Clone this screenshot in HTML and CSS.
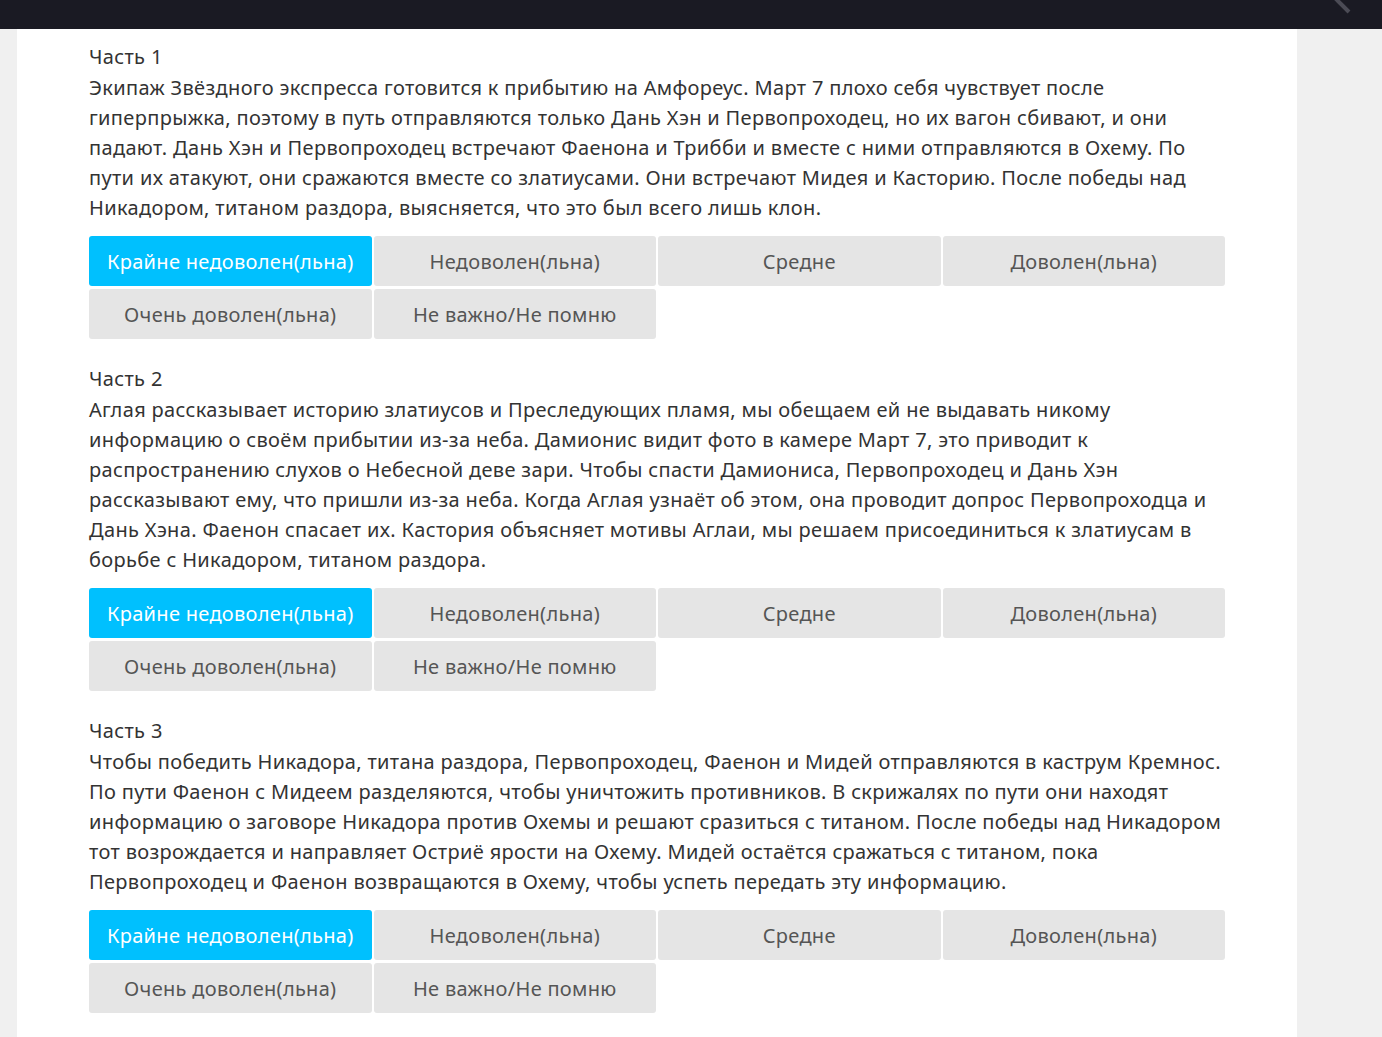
FILE: index.html
```html
<!DOCTYPE html>
<html lang="ru">
<head>
<meta charset="utf-8">
<title>Опрос</title>
<link rel="stylesheet" href="styles.css">
</head>
<body>
<header class="topbar">
  <svg class="close-mark" width="24" height="16" viewBox="0 0 24 16"><line x1="2" y1="-4" x2="18" y2="12" stroke="#4b4b55" stroke-width="4"/></svg>
</header>
<div class="page">
  <main class="panel">
    <section class="part">
      <div class="title">Часть 1</div>
      <p class="desc">Экипаж Звёздного экспресса готовится к прибытию на Амфореус. Март 7 плохо себя чувствует после гиперпрыжка, поэтому в путь отправляются только Дань Хэн и Первопроходец, но их вагон сбивают, и они падают. Дань Хэн и Первопроходец встречают Фаенона и Трибби и вместе с ними отправляются в Охему. По пути их атакуют, они сражаются вместе со златиусами. Они встречают Мидея и Касторию. После победы над Никадором, титаном раздора, выясняется, что это был всего лишь клон.</p>
      <div class="options">
        <button class="opt active">Крайне недоволен(льна)</button>
        <button class="opt">Недоволен(льна)</button>
        <button class="opt">Средне</button>
        <button class="opt">Доволен(льна)</button>
        <button class="opt">Очень доволен(льна)</button>
        <button class="opt">Не важно/Не помню</button>
      </div>
    </section>
    <section class="part">
      <div class="title">Часть 2</div>
      <p class="desc">Аглая рассказывает историю златиусов и Преследующих пламя, мы обещаем ей не выдавать никому информацию о своём прибытии из-за неба. Дамионис видит фото в камере Март 7, это приводит к распространению слухов о Небесной деве зари. Чтобы спасти Дамиониса, Первопроходец и Дань Хэн рассказывают ему, что пришли из-за неба. Когда Аглая узнаёт об этом, она проводит допрос Первопроходца и Дань Хэна. Фаенон спасает их. Кастория объясняет мотивы Аглаи, мы решаем присоединиться к златиусам в борьбе с Никадором, титаном раздора.</p>
      <div class="options">
        <button class="opt active">Крайне недоволен(льна)</button>
        <button class="opt">Недоволен(льна)</button>
        <button class="opt">Средне</button>
        <button class="opt">Доволен(льна)</button>
        <button class="opt">Очень доволен(льна)</button>
        <button class="opt">Не важно/Не помню</button>
      </div>
    </section>
    <section class="part">
      <div class="title">Часть 3</div>
      <p class="desc">Чтобы победить Никадора, титана раздора, Первопроходец, Фаенон и Мидей отправляются в каструм Кремнос. По пути Фаенон с Мидеем разделяются, чтобы уничтожить противников. В скрижалях по пути они находят информацию о заговоре Никадора против Охемы и решают сразиться с титаном. После победы над Никадором тот возрождается и направляет Остриё ярости на Охему. Мидей остаётся сражаться с титаном, пока Первопроходец и Фаенон возвращаются в Охему, чтобы успеть передать эту информацию.</p>
      <div class="options">
        <button class="opt active">Крайне недоволен(льна)</button>
        <button class="opt">Недоволен(льна)</button>
        <button class="opt">Средне</button>
        <button class="opt">Доволен(льна)</button>
        <button class="opt">Очень доволен(льна)</button>
        <button class="opt">Не важно/Не помню</button>
      </div>
    </section>
  </main>
</div>
</body>
</html>
```
FILE: styles.css
```css
html, body {
  margin: 0;
  padding: 0;
  background: #f0f0f0;
  font-family: "Noto Sans", "Open Sans", sans-serif;
  color: #333333;
  letter-spacing: 0.34px;
}
.topbar {
  position: relative;
  height: 29px;
  background: #1a1a23;
}
.close-mark {
  position: absolute;
  left: 1331px;
  top: 0;
}
.page {
  padding-left: 17px;
  width: 1280px;
}
.panel {
  background: #ffffff;
  padding: 13px 72px 24px 72px;
  min-height: 1000px;
}
.part {
  margin-bottom: 25px;
}
.title {
  font-size: 20px;
  line-height: 30px;
}
.desc {
  margin: 1px -4px 13px 0;
  font-size: 20px;
  line-height: 30px;
}
.options {
  display: grid;
  grid-template-columns: repeat(4, 1fr);
  column-gap: 2px;
  row-gap: 3px;
}
.opt {
  height: 50px;
  border: none;
  border-radius: 3px;
  background: #e5e5e5;
  color: #555555;
  font-family: inherit;
  font-size: 20px;
  letter-spacing: 0.3px;
  padding: 0;
  cursor: pointer;
}
.opt.active {
  background: #00c0fe;
  color: #ffffff;
}
```
